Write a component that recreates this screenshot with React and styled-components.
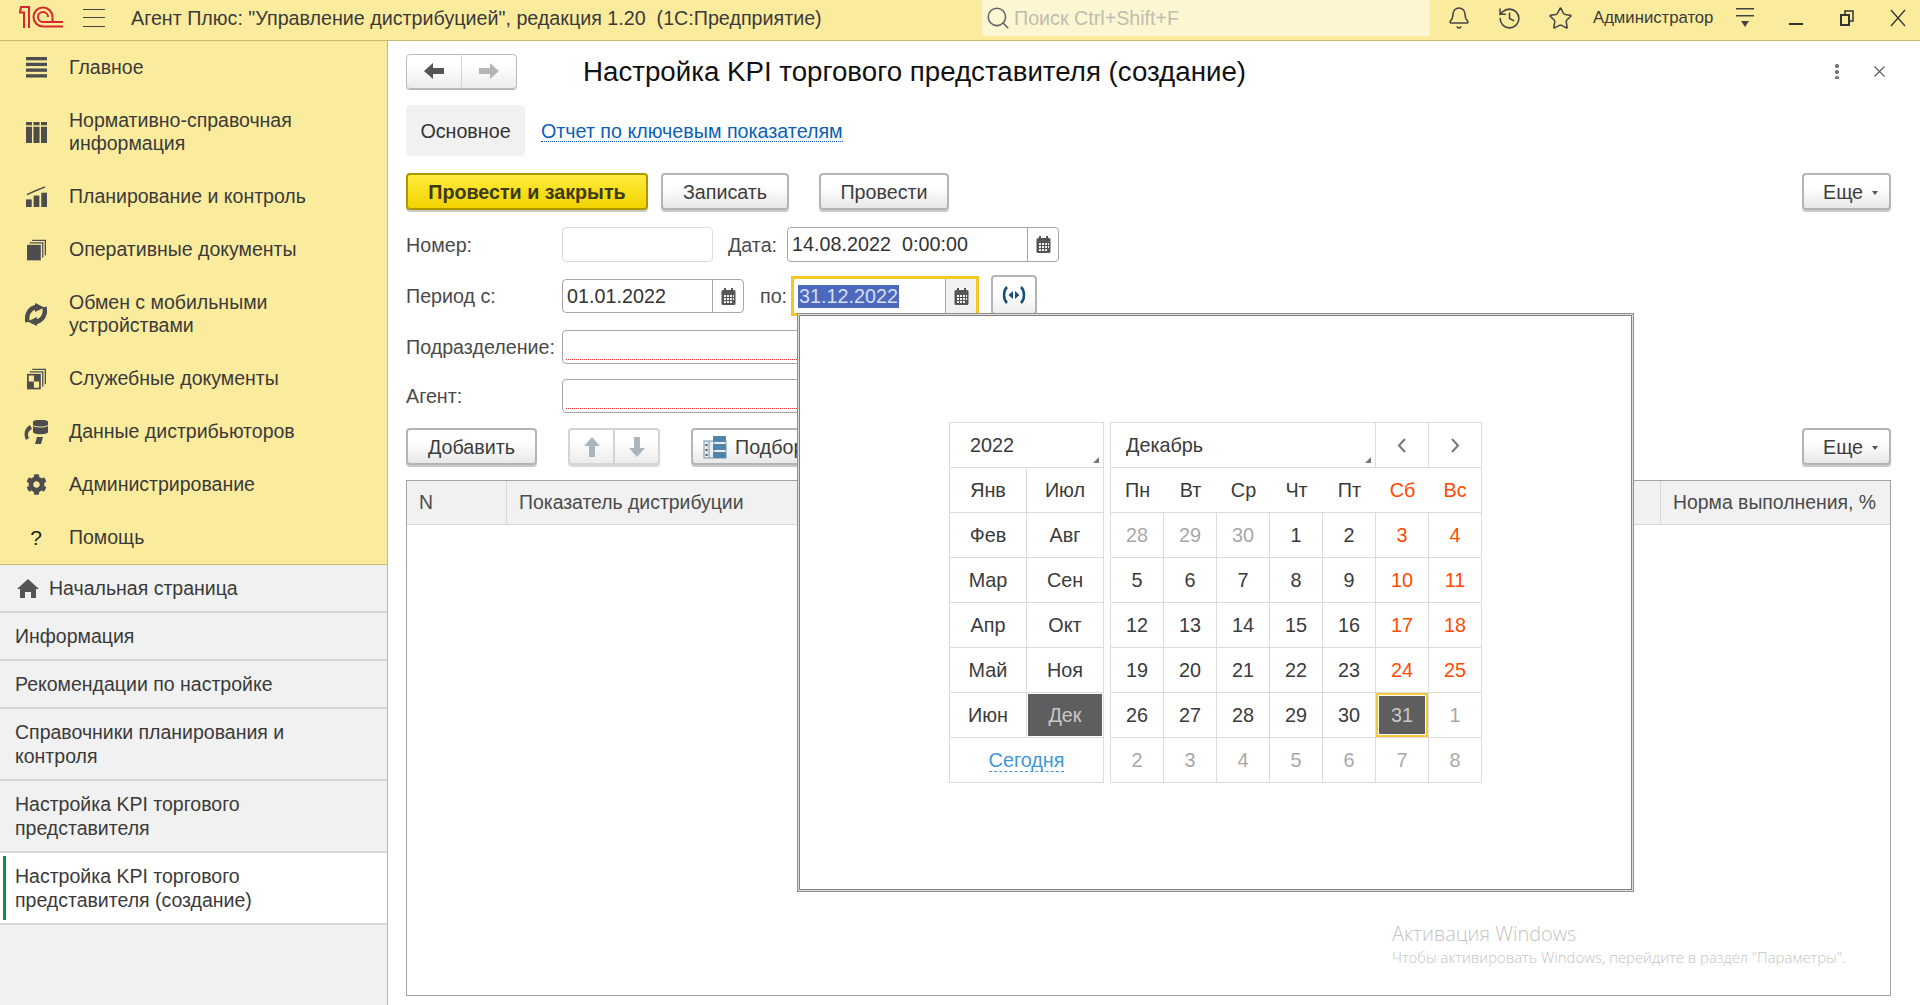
import React from 'react';
import styled, { createGlobalStyle } from 'styled-components';
import { FaCog } from 'react-icons/fa';
import { Bell, History, Star, Search } from 'lucide-react';

const GlobalStyle = createGlobalStyle`
  html, body {
    margin: 0;
    height: 100%;
    overflow: hidden;
    background: #fff;
    font-family: "Liberation Sans", Arial, sans-serif;
    color: #333;
  }
  #root { height: 100%; }
  * { box-sizing: border-box; }
`;

const Page = styled.div`
  position: relative;
  width: 1920px;
  height: 1005px;
  display: grid;
  grid-template-rows: 41px 1fr;
  grid-template-columns: 388px 1fr;
  overflow: hidden;
`;

const Header = styled.header`
  grid-column: 1 / 3;
  display: flex;
  align-items: center;
  height: 41px;
  padding-left: 19px;
  background: #fbec9d;
  border-bottom: 1px solid #c9bc6f;
  overflow: hidden;
`;

const Logo = styled.svg`
  flex: none;
  width: 44px;
  height: 22px;
  margin-bottom: 6px;
`;

const Burger = styled.div`
  flex: none;
  width: 22px;
  height: 18px;
  margin: 0 26px 5px 20px;
  border-top: 1px solid #444;
  border-bottom: 1px solid #444;
  position: relative;
  &::after {
    content: '';
    position: absolute;
    left: 0;
    right: 0;
    top: 7px;
    height: 1px;
    background: #444;
  }
`;

const AppTitle = styled.div`
  flex: 0 0 851px;
  font-size: 19.7px;
  padding-bottom: 3px;
  white-space: nowrap;
  color: #3a3a3a;
`;

const SearchBox = styled.div`
  flex: 0 0 448px;
  height: 36px;
  margin-top: -4px;
  display: flex;
  align-items: center;
  gap: 3px;
  padding-left: 3px;
  background: #fdf6d2;
  border-radius: 0 0 3px 3px;
  font-size: 19.7px;
  color: #bdbdb0;
  svg { color: #666; }
`;

const TopIcon = styled.div`
  flex: none;
  width: ${p => p.$w || 51}px;
  height: 36px;
  margin-top: -4px;
  display: flex;
  align-items: center;
  justify-content: center;
  color: #444;
`;

const UserName = styled.div`
  flex: 0 0 120px;
  margin: -4px 6px 0 7px;
  font-size: 16.7px;
  white-space: nowrap;
  color: #3a3a3a;
`;

const Side = styled.aside`
  display: flex;
  flex-direction: column;
  border-right: 1px solid #c9bc6f;
  background: #f1f1f1;
`;

const Menu = styled.nav`
  background: #fbec9d;
  border-bottom: 1px solid #c9bc6f;
`;

const MenuItem = styled.div`
  display: flex;
  align-items: center;
  height: ${p => (p.$tall ? 76 : 53)}px;
  font-size: 19.5px;
  line-height: 23px;
  color: #3a3a3a;
`;

const MenuIcon = styled.span`
  flex: 0 0 69px;
  display: flex;
  justify-content: center;
  padding-left: 3px;
  color: #4d4d4d;
  font-size: 21px;
`;

const HelpMark = styled.span`
  color: #222;
`;

const OpenTab = styled.div`
  position: relative;
  display: flex;
  align-items: center;
  gap: 10px;
  height: ${p => (p.$tall ? 72 : 48)}px;
  padding-left: ${p => (p.$home ? 17 : 15)}px;
  font-size: 19.5px;
  line-height: 24px;
  color: #3a3a3a;
  background: ${p => (p.$active ? '#fff' : 'transparent')};
  border-bottom: 2px solid #d8d8d8;
  &::before {
    content: ${p => (p.$active ? "''" : 'none')};
    position: absolute;
    left: 3px;
    top: 3px;
    bottom: 3px;
    width: 3px;
    background: #0a9150;
  }
`;

const Content = styled.main`
  display: flex;
  flex-direction: column;
  min-width: 0;
  padding: 12px 29px 9px 18px;
`;

const TitleRow = styled.div`
  display: flex;
  align-items: center;
  height: 36px;
`;

const NavGroup = styled.div`
  flex: none;
  display: flex;
  width: 111px;
  height: 35px;
  background: linear-gradient(#fff 30%, #ececec);
  border: 1px solid #bbb;
  border-radius: 4px;
  box-shadow: 0 1px 0 #b4b4b4;
`;

const FormTitle = styled.h1`
  margin: 0 0 0 66px;
  padding-top: 1px;
  font-size: 27.7px;
  font-weight: 400;
  color: #111;
  white-space: nowrap;
`;

const FormActions = styled.div`
  display: flex;
  align-items: center;
  gap: 35px;
  margin: 0 6px 0 auto;
  color: #666;
`;

const Kebab = styled.div`
  width: 4px;
  height: 16px;
  background: radial-gradient(circle, #777 2px, transparent 2.2px) 0 0 / 4px 6px repeat-y;
`;

const TabsRow = styled.div`
  display: flex;
  align-items: center;
  gap: 16px;
  height: 51px;
  margin-top: 16px;
`;

const ActiveTab = styled.div`
  width: 119px;
  height: 51px;
  padding-top: 1px;
  display: flex;
  align-items: center;
  justify-content: center;
  background: #f1f1f1;
  border-radius: 4px;
  font-size: 19.7px;
  color: #333;
`;

const LinkTab = styled.a`
  margin-top: 1px;
  font-size: 19.7px;
  color: #0b5fb8;
  text-decoration: none;
  border-bottom: 1px dotted #0b5fb8;
  line-height: 20px;
`;

const ButtonRow = styled.div`
  display: flex;
  align-items: flex-start;
  height: 39px;
  margin-top: ${p => p.$top}px;
`;

const Button = styled.div`
  flex: none;
  display: flex;
  align-items: center;
  justify-content: ${p => (p.$icon ? 'flex-start' : 'center')};
  gap: 8px;
  width: ${p => p.$w}px;
  height: 37px;
  margin-left: ${p => p.$left || 0}px;
  padding: 1px 0 0 ${p => (p.$icon ? 10 : 0)}px;
  font-size: 19.7px;
  color: #3c3c3c;
  background: linear-gradient(#fff 35%, #e8e8e8);
  border: 2px solid #b4b4b4;
  border-radius: 4px;
  box-shadow: 0 2px 0 #c9c9c9;
`;

const PrimaryButton = styled(Button)`
  font-weight: 700;
  background: linear-gradient(#ffec3c, #f2d300);
  border-color: #ad9800;
  color: #3c3a10;
`;

const MoreButton = styled(Button)`
  margin-left: auto;
  justify-content: flex-start;
  padding-left: 19px;
  gap: 9px;
  &::after {
    content: '';
    border: 3px solid transparent;
    border-top: 4px solid #555;
    margin-top: 4px;
  }
`;

const IconGroup = styled.div`
  flex: none;
  display: flex;
  width: 92px;
  height: 37px;
  margin-left: 31px;
  background: linear-gradient(#fff 30%, #ececec);
  border: 2px solid #d4d4d4;
  border-radius: 4px;
  box-shadow: 0 2px 0 #d9d9d9;
  overflow: hidden;
`;

const GroupCell = styled.div`
  flex: 1;
  display: flex;
  align-items: center;
  justify-content: center;
  & + & { border-left: 2px solid #d4d4d4; }
`;

const NavCell = styled(GroupCell)`
  & + & { border-left: 1px solid #d4d4d4; }
`;

const ArrowSvg = styled.svg`
  width: 22px;
  height: 22px;
  transform: rotate(${p => p.$rotate}deg);
`;

const FieldRow = styled.div`
  display: flex;
  align-items: center;
  height: ${p => p.$h || 34}px;
  margin-top: ${p => p.$top}px;
  font-size: 19.7px;
  color: #4a4a4a;
`;

const Label = styled.label`
  flex: 0 0 ${p => p.$w || 156}px;
  margin-left: ${p => p.$left || 0}px;
  padding-top: 1px;
  white-space: nowrap;
`;

const Input = styled.div`
  flex: none;
  display: flex;
  align-items: stretch;
  width: ${p => p.$w}px;
  height: 100%;
  border: 1px solid ${p => (p.$light ? '#dcdcdc' : '#a6a6a6')};
  border-radius: 4px;
  color: #333;
  background: ${p =>
    p.$required
      ? 'repeating-linear-gradient(90deg, #e33 0 1px, transparent 1px 2px) left 3px bottom 3px / calc(100% - 6px) 1px no-repeat'
      : '#fff'};
`;

const FocusInput = styled(Input)`
  border: none;
  border-radius: 0;
  outline: 3px solid #f6c825;
`;

const Value = styled.div`
  flex: 1;
  display: flex;
  align-items: center;
  padding-left: 4px;
  white-space: pre;
  letter-spacing: 0.05px;
`;

const Selected = styled.span`
  padding: 0 1px;
  line-height: 23px;
  background: #4d69bd;
  color: #d6def5;
`;

const CalButton = styled.div`
  flex: 0 0 31px;
  display: flex;
  align-items: center;
  justify-content: center;
  background: ${p => (p.$focus ? '#f1f1f1' : 'transparent')};
  border-left: 1px solid #a6a6a6;
`;

const SignalButton = styled.div`
  flex: none;
  width: 46px;
  height: 40px;
  margin: -3px 0 0 15px;
  display: flex;
  align-items: center;
  justify-content: center;
  border: 2px solid #b4b4b4;
  border-radius: 4px;
  background: linear-gradient(#fff 50%, #eee);
`;

const Table = styled.section`
  flex: 1;
  margin-top: 13px;
  border: 1px solid #a3a3a3;
`;

const TableHead = styled.div`
  display: flex;
  height: 44px;
  background: #f1f1f1;
  border-bottom: 1px solid #d8d8d8;
  font-size: 19.4px;
  color: #4a4a4a;
`;

const HeadCell = styled.div`
  flex: ${p => (p.$w ? `0 0 ${p.$w}px` : 1)};
  display: flex;
  align-items: center;
  padding-left: 12px;
  white-space: nowrap;
  & + & { border-left: 1px solid #d8d8d8; }
`;

const Popup = styled.div`
  position: absolute;
  left: 799px;
  top: 315px;
  width: 833px;
  height: 575px;
  display: flex;
  align-items: center;
  justify-content: center;
  gap: 6px;
  background: #fff;
  border: 1px solid #808080;
  box-shadow: 0 0 0 1px #e0e0e0, 0 0 0 2px #8e8e8e;
  font-size: 19.8px;
  color: #3a3a3a;
`;

const CalBox = styled.div`
  width: ${p => p.$w}px;
  height: 361px;
  border: 1px solid #dcdcdc;
`;

const CalGrid = styled.div`
  display: grid;
  grid-template-columns: ${p => p.$cols};
  grid-auto-rows: 45px;
`;

const CalCell = styled.div`
  position: relative;
  display: flex;
  align-items: center;
  justify-content: ${p => (p.$start ? 'flex-start' : 'center')};
  padding-left: ${p => p.$start || 0}px;
  grid-column: ${p => (p.$span ? `span ${p.$span}` : 'auto')};
  border-right: ${p => (p.$line ? '1px solid #dcdcdc' : 'none')};
  border-bottom: ${p => (p.$last ? 'none' : '1px solid #dcdcdc')};
  color: ${p => (p.$sel ? '#c8c8c8' : p.$red ? '#ff4a00' : p.$muted ? '#a8a8a8' : '#3a3a3a')};
  background: ${p => (p.$sel ? '#5e5e5e' : 'transparent')};
  box-shadow: ${p => {
    if (p.$sel === 'month') return 'inset 0 0 0 1px #fff';
    if (p.$sel === 'day') return 'inset 0 0 0 2px #f6c93c, inset 0 0 0 3px #fff';
    return 'none';
  }};
  &::after {
    content: ${p => (p.$corner ? "''" : 'none')};
    position: absolute;
    right: 4px;
    bottom: 4px;
    border: 3px solid transparent;
    border-right-color: #777;
    border-bottom-color: #777;
  }
`;

const TodayLink = styled.span`
  color: #3f97d8;
  border-bottom: 1px dashed #3f97d8;
  line-height: 21px;
`;

const Chevron = styled.svg`
  width: 10px;
  height: 15px;
  fill: none;
  stroke: #777;
  stroke-width: 2;
`;

const Watermark = styled.div`
  position: absolute;
  left: 1392px;
  top: 920px;
  font-family: "Open Sans", sans-serif;
  font-weight: 300;
  color: #c4c4c4;
  font-size: 14.9px;
  line-height: 19px;
  white-space: nowrap;
  pointer-events: none;
  strong {
    display: block;
    font-weight: 300;
    font-size: 19.9px;
    line-height: 28px;
  }
`;

const Logo1C = () => (
  <Logo viewBox="0 0 44 22" fill="none" stroke="#d9262c" strokeWidth="2">
    <path d="M0 6.500h5V22M1 6l1-5h8v21" />
    <path d="M44 20.500H24a9.500 9.500 0 1 1 9.500-9.500v5H44" />
    <path d="M33 16H24a5 5 0 1 1 5-5" />
  </Logo>
);

const CalIcon = () => (
  <svg width="15" height="17" viewBox="0 0 15 17">
    <rect x="0.500" y="2" width="14" height="15" rx="1.500" fill="#555" />
    <rect x="3" y="0" width="2" height="4" fill="#555" />
    <rect x="10" y="0" width="2" height="4" fill="#555" />
    <g fill="#f4f4f4">
      {[3, 6, 9].map(x => [7, 10, 13].map(y => <rect key={`${x}${y}`} x={x} y={y} width="2" height="2" />))}
      <rect x="12" y="7" width="1" height="2" />
      <rect x="12" y="10" width="1" height="2" />
    </g>
  </svg>
);

const MainIcon = () => (
  <svg width="21" height="21" viewBox="0 0 22 22" fill="#4d4d4d">
    <rect y="0" width="22" height="3.500" />
    <rect y="6" width="22" height="3.500" />
    <rect y="12" width="22" height="3.500" />
    <rect y="18" width="22" height="3.500" />
  </svg>
);

const DirectoryIcon = () => (
  <svg width="21" height="21" viewBox="0 0 22 22" fill="#4d4d4d">
    <path d="M0 0h6.300v3.500H0zM7.800 0h6.400v3.500H7.800zM15.700 0H22v3.500h-6.300z" />
    <path d="M0 5h6.300v17H0zM7.800 5h6.400v17H7.800zM15.700 5H22v17h-6.300z" />
  </svg>
);

const ChartIcon = () => (
  <svg width="21" height="21" viewBox="0 0 22 22" fill="#4d4d4d">
    <rect x="0" y="14" width="6" height="8" />
    <rect x="8" y="10" width="6" height="12" />
    <rect x="16" y="7" width="6" height="15" />
    <path d="M1 9l9-4 10-4" stroke="#4d4d4d" strokeWidth="1.500" fill="none" />
  </svg>
);

const DocsIcon = ({ checker }) => (
  <svg width="19" height="22" viewBox="0 0 22 24" fill="#4d4d4d">
    <path d="M6 0h16v18h-1.500V1.500H6z" />
    <path d="M3 3h16v18h-1.500V4.500H3z" />
    <rect x="0" y="6" width="16" height="18" />
    {checker && <path d="M8 15h6v7H8zM2 8h6v7H2z" fill="#fbec9d" />}
  </svg>
);

const SyncIcon = () => (
  <svg width="22" height="23" viewBox="0 0 22 23" fill="none" stroke="#4d4d4d" strokeWidth="4.500">
    <path d="M2.500 19C1 12 4 5.500 11 4" />
    <path d="M19.500 4C21 11 18 17.500 11 19" />
    <path d="M10 0l9.500 4.500L10 9z" fill="#4d4d4d" stroke="none" />
    <path d="M12 14L2.500 18.500 12 23z" fill="#4d4d4d" stroke="none" />
  </svg>
);

const DataIcon = () => (
  <svg width="26" height="24" viewBox="0 0 26 24" fill="#4d4d4d">
    <path d="M10 2c0-3 15-3 15 0v10c0 3-15 3-15 0z" />
    <path d="M10 5.500c3 2 12 2 15 0" stroke="#fbec9d" fill="none" />
    <path d="M7 5C2 8 0 13 3 20l3-2C4 14 5 11 9 9z" />
    <path d="M14 17l6 0-2 7h-6z" />
  </svg>
);

const HomeIcon = () => (
  <svg width="22" height="19" viewBox="0 0 22 19" fill="#555">
    <path d="M11 0l11 10h-3v9h-5v-6H8v6H3v-9H0z" />
  </svg>
);

const ArrowIcon = ({ dir, color }) => {
  const rotate = { left: 0, right: 180, up: 90, down: 270 }[dir];
  return (
    <ArrowSvg viewBox="0 0 22 22" $rotate={rotate}>
      <path d="M1 11l9-8v5h11v6H10v5z" fill={color} />
    </ArrowSvg>
  );
};

const PickIcon = () => (
  <svg width="24" height="24" viewBox="0 0 24 24">
    <rect x="1" y="6" width="22" height="17" fill="#e8eef3" stroke="#7d93a6" />
    <path d="M6 6v17M11 6v17" stroke="#7d93a6" />
    <rect x="2.500" y="9" width="2" height="2" fill="#555" />
    <rect x="2.500" y="14" width="2" height="2" fill="#555" />
    <rect x="2.500" y="19" width="2" height="2" fill="#555" />
    <rect x="10" y="1" width="13" height="6" rx="1" fill="#4f84ad" />
    <rect x="10" y="9" width="13" height="6" rx="1" fill="#4f84ad" />
    <rect x="10" y="17" width="13" height="6" rx="1" fill="#4f84ad" />
  </svg>
);

const SignalIcon = () => (
  <svg width="26" height="18" viewBox="0 0 26 18" fill="none" stroke="#164f7c" strokeWidth="2.500">
    <path d="M6 1C2 5 2 13 6 17" />
    <path d="M20 1c4 4 4 12 0 16" />
    <path d="M12 5v8L7.500 9zM14 5v8l4.500-4z" fill="#164f7c" stroke="none" />
  </svg>
);

const RowsIcon = () => (
  <svg width="22" height="24" viewBox="0 0 22 24" fill="#444">
    <rect x="2" y="2" width="18" height="1.500" />
    <rect x="2" y="9" width="18" height="1.500" />
    <path d="M7 15h8l-4 6z" />
  </svg>
);

const menu = [
  { title: 'Главное', icon: <MainIcon /> },
  { title: <>Нормативно-справочная<br />информация</>, icon: <DirectoryIcon />, tall: true },
  { title: 'Планирование и контроль', icon: <ChartIcon /> },
  { title: 'Оперативные документы', icon: <DocsIcon /> },
  { title: <>Обмен с мобильными<br />устройствами</>, icon: <SyncIcon />, tall: true },
  { title: 'Служебные документы', icon: <DocsIcon checker /> },
  { title: 'Данные дистрибьюторов', icon: <DataIcon /> },
  { title: 'Администрирование', icon: <FaCog /> },
  { title: 'Помощь', icon: <HelpMark>?</HelpMark> },
];

const months = [
  ['Янв', 'Июл'],
  ['Фев', 'Авг'],
  ['Мар', 'Сен'],
  ['Апр', 'Окт'],
  ['Май', 'Ноя'],
  ['Июн', 'Дек'],
];

const weekdays = ['Пн', 'Вт', 'Ср', 'Чт', 'Пт', 'Сб', 'Вс'];

const days = [28, 29, 30];
for (let d = 1; d <= 31; d++) days.push(d);
for (let d = 1; d <= 8; d++) days.push(d);

export default function App() {
  return (
    <Page>
      <GlobalStyle />
      <Header>
        <Logo1C />
        <Burger />
        <AppTitle>Агент Плюс: "Управление дистрибуцией", редакция 1.20&nbsp;&nbsp;(1С:Предприятие)</AppTitle>
        <SearchBox>
          <Search size={26} strokeWidth={1.5} />
          Поиск Ctrl+Shift+F
        </SearchBox>
        <TopIcon $w={3} />
        <TopIcon><Bell size={24} strokeWidth={1.5} /></TopIcon>
        <TopIcon><History size={25} strokeWidth={1.5} /></TopIcon>
        <TopIcon><Star size={25} strokeWidth={1.5} /></TopIcon>
        <UserName>Администратор</UserName>
        <TopIcon><RowsIcon /></TopIcon>
        <TopIcon>
          <svg width="14" height="16"><rect y="13" width="14" height="2" fill="#333" /></svg>
        </TopIcon>
        <TopIcon>
          <svg width="14" height="16" fill="none" stroke="#333" strokeWidth="2">
            <rect x="1" y="5" width="8" height="10" />
            <path d="M5 4V1h8v10h-3" strokeWidth="1.500" />
          </svg>
        </TopIcon>
        <TopIcon>
          <svg width="16" height="18" stroke="#333" strokeWidth="1.300">
            <path d="M1 1l14 16M15 1L1 17" />
          </svg>
        </TopIcon>
      </Header>

      <Side>
        <Menu>
          {menu.map((item, i) => (
            <MenuItem key={i} $tall={item.tall}>
              <MenuIcon>{item.icon}</MenuIcon>
              <span>{item.title}</span>
            </MenuItem>
          ))}
        </Menu>
        <OpenTab $home><HomeIcon />Начальная страница</OpenTab>
        <OpenTab>Информация</OpenTab>
        <OpenTab>Рекомендации по настройке</OpenTab>
        <OpenTab $tall>Справочники планирования и<br />контроля</OpenTab>
        <OpenTab $tall>Настройка KPI торгового<br />представителя</OpenTab>
        <OpenTab $tall $active>Настройка KPI торгового<br />представителя (создание)</OpenTab>
      </Side>

      <Content>
        <TitleRow>
          <NavGroup>
            <NavCell><ArrowIcon dir="left" color="#555" /></NavCell>
            <NavCell><ArrowIcon dir="right" color="#b5b5b5" /></NavCell>
          </NavGroup>
          <FormTitle>Настройка KPI торгового представителя (создание)</FormTitle>
          <FormActions>
            <Kebab />
            <svg width="11" height="11" stroke="#555" strokeWidth="1.100">
              <path d="M.5.500l10 10M10.500.500l-10 10" />
            </svg>
          </FormActions>
        </TitleRow>

        <TabsRow>
          <ActiveTab>Основное</ActiveTab>
          <LinkTab>Отчет по ключевым показателям</LinkTab>
        </TabsRow>

        <ButtonRow $top={17}>
          <PrimaryButton $w={242}>Провести и закрыть</PrimaryButton>
          <Button $w={128} $left={13}>Записать</Button>
          <Button $w={130} $left={30}>Провести</Button>
          <MoreButton $w={89}>Еще</MoreButton>
        </ButtonRow>

        <FieldRow $top={15} $h={35}>
          <Label>Номер:</Label>
          <Input $w={151} $light />
          <Label $w={59} $left={15}>Дата:</Label>
          <Input $w={272}>
            <Value>14.08.2022  0:00:00</Value>
            <CalButton><CalIcon /></CalButton>
          </Input>
        </FieldRow>

        <FieldRow $top={17}>
          <Label>Период с:</Label>
          <Input $w={182}>
            <Value>01.01.2022</Value>
            <CalButton><CalIcon /></CalButton>
          </Input>
          <Label $w={34} $left={16}>по:</Label>
          <FocusInput $w={182}>
            <Value><Selected>31.12.2022</Selected></Value>
            <CalButton $focus><CalIcon /></CalButton>
          </FocusInput>
          <SignalButton><SignalIcon /></SignalButton>
        </FieldRow>

        <FieldRow $top={17}>
          <Label>Подразделение:</Label>
          <Input $w={640} $required />
        </FieldRow>

        <FieldRow $top={15}>
          <Label>Агент:</Label>
          <Input $w={640} $required />
        </FieldRow>

        <ButtonRow $top={15}>
          <Button $w={131}>Добавить</Button>
          <IconGroup>
            <GroupCell><ArrowIcon dir="up" color="#a9b6bf" /></GroupCell>
            <GroupCell><ArrowIcon dir="down" color="#a9b6bf" /></GroupCell>
          </IconGroup>
          <Button $w={150} $left={31} $icon><PickIcon />Подбор</Button>
          <MoreButton $w={89}>Еще</MoreButton>
        </ButtonRow>

        <Table>
          <TableHead>
            <HeadCell $w={99}>N</HeadCell>
            <HeadCell>Показатель дистрибуции</HeadCell>
            <HeadCell $w={230}>Норма выполнения, %</HeadCell>
          </TableHead>
        </Table>
      </Content>

      <Popup>
        <CalBox $w={155}>
          <CalGrid $cols="77px 76px">
            <CalCell $span={2} $start={20} $corner>2022</CalCell>
            {months.map(([a, b]) => (
              <React.Fragment key={a}>
                <CalCell $line>{a}</CalCell>
                <CalCell $sel={b === 'Дек' ? 'month' : undefined}>{b}</CalCell>
              </React.Fragment>
            ))}
            <CalCell $span={2} $last><TodayLink>Сегодня</TodayLink></CalCell>
          </CalGrid>
        </CalBox>
        <CalBox $w={372}>
          <CalGrid $cols="repeat(6, 53px) 52px">
            <CalCell $span={5} $start={15} $corner $line>Декабрь</CalCell>
            <CalCell $line>
              <Chevron viewBox="0 0 10 15"><path d="M8 1L2 7.500 8 14" /></Chevron>
            </CalCell>
            <CalCell>
              <Chevron viewBox="0 0 10 15"><path d="M2 1l6 6.500L2 14" /></Chevron>
            </CalCell>
            {weekdays.map((w, i) => (
              <CalCell key={w} $red={i > 4}>{w}</CalCell>
            ))}
            {days.map((d, i) => {
              const other = i < 3 || i > 33;
              return (
                <CalCell
                  key={i}
                  $line={i % 7 !== 6}
                  $last={i >= 35}
                  $muted={other}
                  $red={!other && i % 7 > 4}
                  $sel={i === 33 ? 'day' : undefined}
                >
                  {d}
                </CalCell>
              );
            })}
          </CalGrid>
        </CalBox>
      </Popup>

      <Watermark>
        <strong>Активация Windows</strong>
        Чтобы активировать Windows, перейдите в раздел "Параметры".
      </Watermark>
    </Page>
  );
}
